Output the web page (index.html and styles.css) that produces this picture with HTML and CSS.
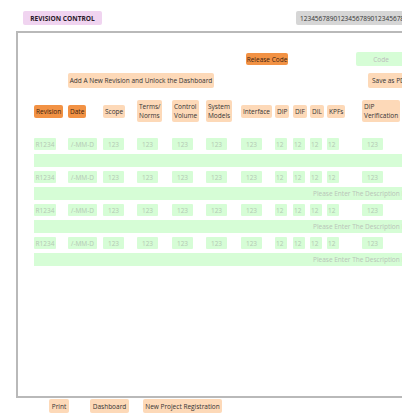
FILE: index.html
```html
<!DOCTYPE html>
<html>
<head>
<meta charset="utf-8">
<link rel="stylesheet" href="styles.css">
</head>
<body>
<div class="page">
  <header class="topbar">
    <div class="title">REVISION CONTROL</div>
    <div class="serial">12345678901234567890123456789012345</div>
  </header>
  <main class="panel">
    <div class="row row-release">
      <button class="btn btn-orange release">Release Code</button>
      <div class="code">Code</div>
    </div>
    <div class="row row-actions">
      <button class="btn btn-peach add">Add A New Revision and Unlock the Dashboard</button>
      <button class="btn btn-peach pdf">Save as PDF</button>
    </div>
    <div class="grid head">
      <div class="h h-orange">Revision</div>
      <div class="h h-orange">Date</div>
      <div class="h">Scope</div>
      <div class="h">Terms/<br>Norms</div>
      <div class="h">Control<br>Volume</div>
      <div class="h">System<br>Models</div>
      <div class="h">Interface</div>
      <div class="h">DIP</div>
      <div class="h">DIF</div>
      <div class="h">DIL</div>
      <div class="h">KPFs</div>
      <div class="h">DIP<br>Verification</div>
    </div>
    <div class="rows">
      <div class="entry">
        <div class="grid data">
          <div class="c c-rev">R1234</div><div class="c c-date">/-MM-D</div><div class="c">123</div><div class="c">123</div><div class="c">123</div><div class="c">123</div><div class="c">123</div><div class="c c-sm">12</div><div class="c c-sm">12</div><div class="c c-sm">12</div><div class="c c-sm">12</div><div class="c">123</div>
        </div>
        <div class="desc"></div>
      </div>
      <div class="entry">
        <div class="grid data">
          <div class="c c-rev">R1234</div><div class="c c-date">/-MM-D</div><div class="c">123</div><div class="c">123</div><div class="c">123</div><div class="c">123</div><div class="c">123</div><div class="c c-sm">12</div><div class="c c-sm">12</div><div class="c c-sm">12</div><div class="c c-sm">12</div><div class="c">123</div>
        </div>
        <div class="desc">Please Enter The Description Here</div>
      </div>
      <div class="entry">
        <div class="grid data">
          <div class="c c-rev">R1234</div><div class="c c-date">/-MM-D</div><div class="c">123</div><div class="c">123</div><div class="c">123</div><div class="c">123</div><div class="c">123</div><div class="c c-sm">12</div><div class="c c-sm">12</div><div class="c c-sm">12</div><div class="c c-sm">12</div><div class="c">123</div>
        </div>
        <div class="desc">Please Enter The Description Here</div>
      </div>
      <div class="entry">
        <div class="grid data">
          <div class="c c-rev">R1234</div><div class="c c-date">/-MM-D</div><div class="c">123</div><div class="c">123</div><div class="c">123</div><div class="c">123</div><div class="c">123</div><div class="c c-sm">12</div><div class="c c-sm">12</div><div class="c c-sm">12</div><div class="c c-sm">12</div><div class="c">123</div>
        </div>
        <div class="desc">Please Enter The Description Here</div>
      </div>
    </div>
  </main>
  <footer class="footer">
    <button class="btn btn-peach f-print">Print</button>
    <button class="btn btn-peach f-dash">Dashboard</button>
    <button class="btn btn-peach f-new">New Project Registration</button>
  </footer>
</div>
</body>
</html>
```
FILE: styles.css
```css
* { box-sizing: border-box; }
html, body {
  margin: 0;
  padding: 0;
  background: #ffffff;
  overflow: hidden;
}
body {
  width: 402px;
  height: 414px;
  font-family: "Open Sans", "Noto Sans", sans-serif;
  font-size: 6.5px;
  color: #333;
}
.page {
  width: 402px;
  height: 414px;
  overflow: hidden;
  padding-top: 11px;
}
.topbar {
  display: flex;
  align-items: center;
  height: 14px;
  width: 460px;
}
.title {
  margin-left: 23px;
  width: 79px;
  height: 14px;
  background: #f0d4f0;
  border-radius: 2px;
  font-weight: 700;
  font-size: 6.6px;
  color: #2a1a2a;
  display: flex;
  align-items: center;
  justify-content: center;
}
.serial {
  margin-left: 194px;
  height: 14px;
  background: #d6d6d6;
  border-radius: 2px;
  padding: 0 4px;
  display: flex;
  align-items: center;
  color: #333;
  white-space: nowrap;
}
.panel {
  margin-top: 6px;
  margin-left: 16px;
  width: 440px;
  height: 367px;
  border: 2px solid #b9b9b9;
  border-right: none;
}
.row {
  display: flex;
  align-items: center;
}
.btn {
  font-family: inherit;
  font-size: inherit;
  border: none;
  padding: 0 4px;
  margin: 0;
  color: #333;
  border-radius: 2px;
  display: flex;
  align-items: center;
  justify-content: center;
  white-space: nowrap;
  flex: none;
}
.btn-orange { background: #f29244; color: #3a2210; }
.btn-peach { background: #fdd9b8; }
.row-release {
  padding-top: 19px;
  height: 33px;
}
.release {
  margin-left: 228px;
  width: 42px;
  height: 12px;
}
.code {
  margin-left: 68px;
  width: 70px;
  height: 14px;
  background: #d6fdd6;
  border-radius: 2px;
  color: #bbbbbb;
  display: flex;
  align-items: center;
  justify-content: center;
  padding-right: 20px;
}
.row-actions {
  margin-top: 7px;
  height: 15px;
}
.add {
  margin-left: 50px;
  width: 146px;
  height: 15px;
}
.pdf {
  margin-left: 154px;
  width: 50px;
  height: 15px;
  justify-content: flex-start;
}
.grid {
  display: grid;
  grid-template-columns: 34px 35px 34px 35px 34px 35px 34px 18px 17px 17px 35px 60px;
  margin-left: 16px;
  align-items: center;
}
.head {
  margin-top: 12px;
  height: 22px;
}
.h {
  justify-self: start;
  background: #fdd9b8;
  border-radius: 2px;
  padding: 2px 2px;
  line-height: 9px;
  color: #333;
  white-space: nowrap;
  min-height: 12px;
  display: flex;
  align-items: center;
}
.h-orange { background: #f29244; color: #3a2210; }
.rows {
  margin-top: 16px;
  display: flex;
  flex-direction: column;
  gap: 4px;
}
.entry {
  display: flex;
  flex-direction: column;
  gap: 4px;
}
.data { height: 12px; }
.c {
  justify-self: start;
  width: 21px;
  height: 12px;
  background: #d6fdd6;
  border-radius: 1px;
  color: #b4c8b4;
  display: flex;
  align-items: center;
  justify-content: center;
  overflow: hidden;
  white-space: nowrap;
}
.c-rev { width: 22px; }
.c-date { width: 29px; }
.c-sm { width: 12px; justify-content: flex-start; padding-left: 1px; }
.desc {
  margin-left: 16px;
  height: 13px;
  background: #d6fdd6;
  color: #b8c4b8;
  padding-left: 279px;
  white-space: nowrap;
  overflow: hidden;
  display: flex;
  align-items: center;
}
.footer {
  display: flex;
  align-items: center;
  height: 14px;
  margin-top: 1px;
}
.f-print { margin-left: 49px; width: 20px; height: 14px; }
.f-dash { margin-left: 21px; width: 39px; height: 14px; }
.f-new { margin-left: 14px; width: 79px; height: 14px; }
```
